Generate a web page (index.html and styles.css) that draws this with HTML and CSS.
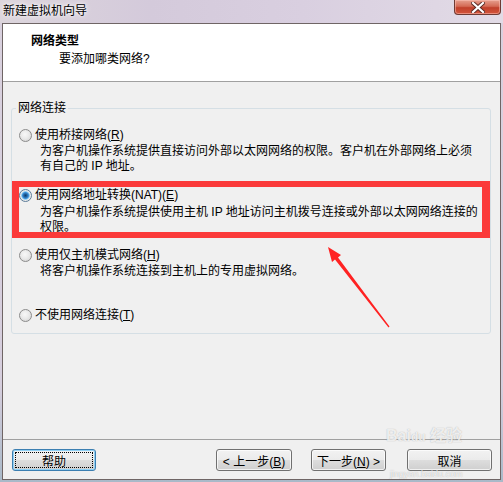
FILE: index.html
```html
<!DOCTYPE html>
<html lang="zh-CN">
<head>
    <meta charset="UTF-8">
    <title>新建虚拟机向导</title>
    <link rel="stylesheet" href="styles.css">
</head>
<body>
    <div class="window">
        <div class="titlebar">
            <span class="title">新建虚拟机向导</span>
            <span class="close">
                <svg width="14" height="11" viewBox="0 0 14 11">
                    <path d="M2 1 L12 10 M12 1 L2 10" stroke="#5a2a24" stroke-width="4" stroke-linecap="square"/>
                    <path d="M2 1 L12 10 M12 1 L2 10" stroke="#fff" stroke-width="2.2" stroke-linecap="square"/>
                </svg>
            </span>
        </div>
        <div class="client">
            <div class="header">
                <div class="header-title">网络类型</div>
                <div class="header-sub">要添加哪类网络?</div>
            </div>
            <div class="body">
                <fieldset class="group">
                    <legend>网络连接</legend>
                    <div class="option">
                        <div class="option-label"><span class="radio"></span>使用桥接网络(<u>R</u>)</div>
                        <div class="option-desc">为客户机操作系统提供直接访问外部以太网网络的权限。客户机在外部网络上必须<br>有自己的 IP 地址。</div>
                    </div>
                    <div class="option opt-nat">
                        <div class="option-label"><span class="radio checked"></span>使用网络地址转换(NAT)(<u>E</u>)</div>
                        <div class="option-desc">为客户机操作系统提供使用主机 IP 地址访问主机拨号连接或外部以太网网络连接的<br>权限。</div>
                    </div>
                    <div class="option opt-host">
                        <div class="option-label"><span class="radio"></span>使用仅主机模式网络(<u>H</u>)</div>
                        <div class="option-desc">将客户机操作系统连接到主机上的专用虚拟网络。</div>
                    </div>
                    <div class="option opt-none">
                        <div class="option-label"><span class="radio"></span>不使用网络连接(<u>T</u>)</div>
                    </div>
                </fieldset>
                <div class="footer">
                    <button class="btn btn-help">帮助</button>
                    <button class="btn btn-prev">&lt; 上一步(<u>B</u>)</button>
                    <button class="btn btn-next">下一步(<u>N</u>) &gt;</button>
                    <button class="btn btn-cancel">取消</button>
                </div>
            </div>
        </div>

        <!-- annotation layer -->
        <div class="mark-box"></div>
        <svg class="mark-arrow" width="503" height="482" viewBox="0 0 503 482">
            <polygon points="328,247 341,255 338,257.5 389.5,326.5 388.5,327.5 335,259.5 332,262" fill="#f22"/>
        </svg>
        <div class="wm-logo">Bai<span class="wm-paw">du</span> 经验</div>
        <div class="wm-url">jingyan.baidu.com</div>
    </div>
</body>
</html>
```

FILE: styles.css
```css
* {
    box-sizing: border-box;
}
body {
    margin: 0;
    font-family: "Liberation Sans", "Noto Sans CJK SC", sans-serif;
    font-size: 12px;
    color: #000;
    background: #cfc8d8;
}
.window {
    position: relative;
    width: 503px;
    height: 482px;
    display: flex;
    flex-direction: column;
    background: linear-gradient(to bottom, #d9d1de 0%, #d6cedd 80%, #a9b9c8 100%);
    overflow: hidden;
}
.titlebar {
    height: 23px;
    display: flex;
    align-items: flex-start;
    background: linear-gradient(to right, #dcd5dc 0%, #d4cadb 30%, #d9cfe0 60%, #e2dbe6 100%);
}
.title {
    padding: 3px 0 0 3px;
    line-height: 16px;
    text-shadow: 0 0 6px #fff, 0 0 3px #fff;
}
.close {
    margin-left: auto;
    margin-right: 2px;
    width: 47px;
    height: 15px;
    display: flex;
    align-items: center;
    justify-content: center;
    border: 1px solid #6e3a33;
    border-top: none;
    border-radius: 0 0 4px 4px;
    background: linear-gradient(to bottom, #e6a08f 0%, #d46a55 45%, #c0402b 55%, #d4553b 100%);
    box-shadow: inset 0 0 0 1px rgba(255, 200, 190, 0.5);
}
.client {
    flex: 1;
    margin: 0 2px 2px 2px;
    border: 1px solid #6f6565;
    display: flex;
    flex-direction: column;
    background: #f0f0f0;
}
.header {
    height: 58px;
    background: #fff;
    border-bottom: 1px solid #a0a0a0;
    padding: 10px 0 0 28px;
}
.header-title {
    font-weight: bold;
    line-height: 15px;
}
.header-sub {
    margin: 3px 0 0 28px;
    line-height: 15px;
}
.body {
    flex: 1;
    display: flex;
    flex-direction: column;
    padding-top: 18px;
}
.group {
    margin: 0 9px 0 8px;
    padding: 12px 7px 10px 7px;
    border: 1px solid #d5dfe5;
    border-radius: 3px;
    min-inline-size: 0;
}
.group legend {
    padding: 0 2px;
    margin-left: -3px;
    line-height: 16px;
}
.option + .option {
    margin-top: 14px;
}
.option.opt-host {
    margin-top: 13px;
}
.option.opt-none {
    margin-top: 29px;
}
.option-label {
    display: flex;
    align-items: center;
    line-height: 15px;
    white-space: nowrap;
}
.option-desc {
    padding: 1px 0 0 21px;
    line-height: 15px;
    white-space: nowrap;
}
.opt-nat .option-desc {
    padding-top: 2px;
}
.radio {
    width: 13px;
    height: 13px;
    margin-right: 3px;
    border-radius: 50%;
    border: 1px solid #8b8b8b;
    background: radial-gradient(circle at 45% 40%, #f8f8f8 0, #eaeaea 45%, #cfcfcf 100%);
    flex-shrink: 0;
}
.radio.checked {
    border-color: #5b7c99;
    background: radial-gradient(circle at 50% 50%, #0e3b66 0, #1f5f9c 1.5px, #3d8fd6 3px, #8fd0f5 4px, #e9e9e9 4.6px, #f4f4f4 100%);
}
.footer {
    margin-top: auto;
    border-top: 1px solid #a0a0a0;
    height: 40px;
    padding: 9px 8px 0 9px;
    display: flex;
    align-items: flex-start;
}
.btn {
    position: relative;
    height: 22px;
    padding: 0;
    font-family: inherit;
    font-size: 12px;
    color: #000;
    border: 1px solid #707070;
    border-radius: 3px;
    background: linear-gradient(to bottom, #f2f2f2 0%, #ebebeb 48%, #dddddd 52%, #cfcfcf 100%);
    box-shadow: inset 0 0 0 1px rgba(255, 255, 255, 0.7);
}
.btn-help {
    width: 84px;
    border-color: #3c7fb1;
    box-shadow: inset 0 0 0 1px #8fd0f5;
}
.btn-help::after {
    content: "";
    position: absolute;
    inset: 2px;
    border: 1px dotted #000;
}
.btn-prev {
    width: 76px;
    margin-left: auto;
}
.btn-next {
    width: 75px;
    margin-left: 19px;
}
.btn-cancel {
    width: 85px;
    margin-left: 21px;
}
.mark-box {
    position: absolute;
    left: 12px;
    top: 181px;
    width: 478px;
    height: 57px;
    border: 6px solid #fb3a3a;
    border-left-width: 7px;
    border-right-width: 8px;
}
.mark-arrow {
    position: absolute;
    left: 0;
    top: 0;
    pointer-events: none;
}
.wm-logo,
.wm-url {
    position: absolute;
    color: rgba(255, 255, 255, 0.8);
    text-shadow: 0 0 1px rgba(120, 120, 120, 0.6);
    font-family: "Liberation Sans", "Noto Sans CJK SC", sans-serif;
    pointer-events: none;
}
.wm-logo {
    left: 386px;
    top: 427px;
    font-size: 16px;
    font-weight: bold;
    line-height: 18px;
}
.wm-paw {
    font-size: 12px;
}
.wm-url {
    left: 390px;
    top: 469px;
    font-size: 9px;
    line-height: 10px;
}
```
